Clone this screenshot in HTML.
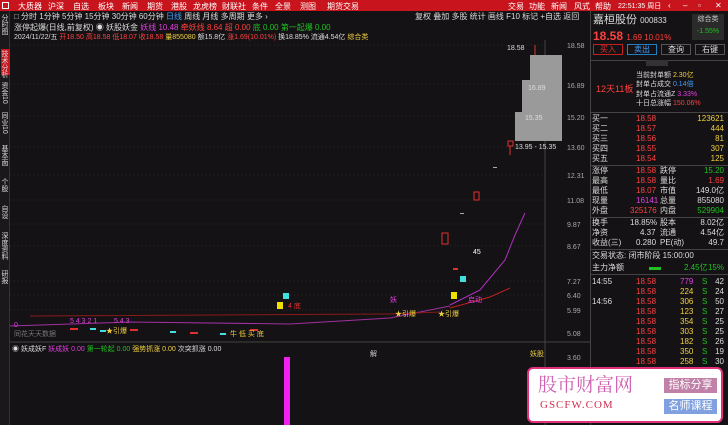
<!DOCTYPE html>
<html><head><meta charset="utf-8"><style>
*{margin:0;padding:0;box-sizing:border-box}
body{width:728px;height:425px;overflow:hidden;background:#141214;font-family:"Liberation Sans","Noto Sans CJK SC",sans-serif;font-size:8px;color:#ccc;position:relative}
.a{position:absolute;white-space:nowrap;line-height:1}
.top{position:absolute;left:0;top:0;width:728px;height:11px;background:#c8141c}
.top span{position:absolute;top:1px;color:#fff;font-size:8px}
.r{color:#ff4040}.g{color:#20c020}.y{color:#f0d040}.m{color:#e040e0}.w{color:#ddd}
.row{position:absolute;left:592px;width:132px;height:10px;font-size:8px;line-height:10px}
.row span{position:absolute}
</style></head><body>
<div class="top">
<div class="a" style="left:2px;top:2px;width:7px;height:7px;border:1px solid #fff"></div>
<span style="left:18px">大质器</span><span style="left:48px">沪深</span><span style="left:73px">自选</span><span style="left:98px">板块</span><span style="left:122px">新闻</span><span style="left:147px">期货</span><span style="left:171px">港股</span><span style="left:193px">龙虎榜</span><span style="left:222px">财联社</span><span style="left:252px">条件</span><span style="left:275px">全景</span><span style="left:300px">测图</span><span style="left:327px">期货交易</span>
<span style="left:508px">交易</span><span style="left:529px">功能</span><span style="left:551px">新闻</span><span style="left:574px">风式</span><span style="left:595px">帮助</span><span style="left:618px;font-size:7px">22:51:35 周日</span><span style="left:668px">‹</span><span style="left:683px">–</span><span style="left:698px">▫</span><span style="left:715px">✕</span>
</div>
<div class="a" style="left:0;top:11px;width:10px;height:414px;background:#1a181a;border-right:1px solid #333"></div>
<div class="a" style="left:1px;top:49px;width:9px;height:26px;background:#c8141c"></div>
<div class="a w" style="left:1px;top:14px;font-size:7px;writing-mode:vertical-rl">分时图</div>
<div class="a w" style="left:1px;top:50px;font-size:7px;writing-mode:vertical-rl">技术分析</div>
<div class="a w" style="left:1px;top:82px;font-size:7px;writing-mode:vertical-rl">资金10</div>
<div class="a w" style="left:1px;top:112px;font-size:7px;writing-mode:vertical-rl">同业10</div>
<div class="a w" style="left:1px;top:145px;font-size:7px;writing-mode:vertical-rl">基本面</div>
<div class="a w" style="left:1px;top:178px;font-size:7px;writing-mode:vertical-rl">个股</div>
<div class="a w" style="left:1px;top:205px;font-size:7px;writing-mode:vertical-rl">自设</div>
<div class="a w" style="left:1px;top:232px;font-size:7px;writing-mode:vertical-rl">深度资料</div>
<div class="a w" style="left:1px;top:270px;font-size:7px;writing-mode:vertical-rl">研报</div>
<div class="a w" style="left:14px;top:13px">□ 分时 1分钟 5分钟 15分钟 30分钟 60分钟 <span style="color:#40a0ff">日线</span> 周线 月线 多周期 更多 ›</div>
<div class="a w" style="left:415px;top:13px">复权 叠加 多股 统计 画线 F10 标记 +自选 返回</div>
<div class="a w" style="left:14px;top:24px">涨停起爆(日线,前复权) ◉ <span class="w">妖股妖金</span> <span class="m">妖线 10.48</span> <span class="r">牵妖线 8.64 超 0.00</span> <span class="g">底 0.00 第一起爆 0.00</span></div>
<div class="a w" style="left:14px;top:34px;font-size:7px">2024/11/22/五 <span class="r">开18.50 高18.58 低18.07 收18.58</span> <span class="y">量855080</span> 额15.8亿 <span class="r">涨1.69(10.01%)</span> 换18.85% 流通4.54亿 <span class="y">综合类</span></div>
<svg class="a" style="left:10px;top:40px" width="580" height="385">
<g stroke="#2a2a2a" stroke-dasharray="1 3">
<line x1="0" y1="5" x2="535" y2="5"/><line x1="0" y1="44" x2="535" y2="44"/><line x1="0" y1="76" x2="535" y2="76"/><line x1="0" y1="107" x2="535" y2="107"/><line x1="0" y1="135" x2="535" y2="135"/><line x1="0" y1="160" x2="535" y2="160"/><line x1="0" y1="184" x2="535" y2="184"/><line x1="0" y1="206" x2="535" y2="206"/><line x1="0" y1="241" x2="535" y2="241"/><line x1="0" y1="255" x2="535" y2="255"/><line x1="0" y1="270" x2="535" y2="270"/>
</g>
<line x1="535" y1="0" x2="535" y2="385" stroke="#444"/>
<line x1="0" y1="302" x2="580" y2="302" stroke="#444"/>
<rect x="520" y="15" width="32" height="26" fill="#9a9a9a"/>
<rect x="512" y="40" width="40" height="32" fill="#9a9a9a"/>
<rect x="505" y="72" width="47" height="29" fill="#9a9a9a"/>
<text x="518" y="50" fill="#ddd" font-size="7">16.89</text>
<text x="515" y="80" fill="#ddd" font-size="7">15.35</text>
<text x="505" y="109" fill="#ddd" font-size="7">13.95 - 15.35</text>
<text x="497" y="10" fill="#ddd" font-size="7">18.58</text>
<line x1="525" y1="5" x2="525" y2="15" stroke="#e03030"/>
<rect x="498" y="101" width="5" height="5" fill="none" stroke="#e03030"/>
<line x1="500" y1="106" x2="500" y2="115" stroke="#e03030"/>
<rect x="483" y="127" width="4" height="1" fill="#aaa"/>
<rect x="464" y="152" width="5" height="8" fill="none" stroke="#e03030"/>
<rect x="450" y="173" width="4" height="1" fill="#aaa"/>
<rect x="432" y="193" width="6" height="11" fill="none" stroke="#e03030"/>
<text x="463" y="214" fill="#fff" font-size="7">45</text>
<rect x="443" y="228" width="5" height="2" fill="#e03030"/>
<rect x="450" y="236" width="6" height="6" fill="#40e0e0"/>
<rect x="441" y="252" width="6" height="7" fill="#f0e000"/>
<rect x="273" y="253" width="6" height="6" fill="#40e0e0"/>
<rect x="267" y="262" width="6" height="7" fill="#f0e000"/>
<polyline points="440,265 470,250 495,220 505,195 515,173" fill="none" stroke="#b030c0"/>
<polyline points="0,286 120,282 280,284 380,278 440,266" fill="none" stroke="#a030a0"/>
<polyline points="440,268 480,257 500,248" fill="none" stroke="#c02020"/>
<polyline points="20,276 380,274 430,272" fill="none" stroke="#8a1a1a"/>
<g fill="#e03030"><rect x="60" y="288" width="8" height="2"/><rect x="120" y="289" width="8" height="2"/><rect x="180" y="292" width="8" height="2"/><rect x="240" y="289" width="8" height="2"/></g>
<g fill="#40e0e0"><rect x="80" y="288" width="6" height="2"/><rect x="90" y="290" width="6" height="2"/><rect x="160" y="291" width="6" height="2"/><rect x="210" y="293" width="6" height="2"/></g>
<text x="4" y="287" fill="#e040e0" font-size="7">0</text>
<text x="60" y="283" fill="#e040e0" font-size="7">5 4 3 2 1</text>
<text x="104" y="283" fill="#e040e0" font-size="7">5 4 3</text>
<text x="96" y="293" fill="#f0d040" font-size="7">★引爆</text>
<text x="220" y="296" fill="#f0d040" font-size="7">牛 低 买 底</text>
<text x="278" y="268" fill="#e03030" font-size="7">4 底</text>
<text x="380" y="262" fill="#e040e0" font-size="7">妖</text>
<text x="385" y="276" fill="#f0d040" font-size="7">★引爆</text>
<text x="428" y="276" fill="#f0d040" font-size="7">★引爆</text>
<text x="458" y="262" fill="#e040e0" font-size="7">启动</text>
<text x="4" y="296" fill="#777" font-size="7">同花天天数据</text>
<text x="360" y="316" fill="#ccc" font-size="7">解</text>
<text x="520" y="316" fill="#f0d040" font-size="7">妖股</text>
<rect x="274" y="317" width="6" height="68" fill="#f020f0"/>
<g fill="#aaa" font-size="7"><text x="557" y="8">18.58</text><text x="557" y="48">16.89</text><text x="557" y="80">15.20</text><text x="557" y="110">13.60</text><text x="557" y="138">12.31</text><text x="557" y="163">11.08</text><text x="557" y="187">9.87</text><text x="557" y="209">8.67</text><text x="557" y="244">7.27</text><text x="557" y="258">6.40</text><text x="557" y="273">5.99</text><text x="557" y="296">5.08</text><text x="557" y="320">3.60</text></g>
</svg>
<div class="a w" style="left:12px;top:346px;font-size:7px">◉ 妖成妖F <span class="m">妖成妖 0.00</span> <span class="g">第一轮起 0.00</span> <span class="y">强势抓涨 0.00</span> <span class="w">次突抓涨 0.00</span></div>
<div class="a" style="left:590px;top:11px;width:1px;height:414px;background:#444"></div>
<div class="a w" style="left:593px;top:15px;font-size:11px">嘉桓股份 <span style="font-size:8px">000833</span></div>
<div class="a" style="left:692px;top:14px;width:32px;height:26px;background:#2a2a2a;font-size:7px;color:#ccc;text-align:center;line-height:12px">综合类<br><span class="g">-1.55%</span></div>
<div class="a r" style="left:593px;top:30px;font-size:12px;font-weight:bold">18.58 <span style="font-size:8px;font-weight:normal">1.69 10.01%</span></div>
<div class="a" style="left:593px;top:44px;width:30px;height:11px;border:1px solid #c02020;color:#e03030;text-align:center;line-height:9px">买入</div>
<div class="a" style="left:627px;top:44px;width:30px;height:11px;border:1px solid #2080c0;color:#40a0ff;text-align:center;line-height:9px">卖出</div>
<div class="a w" style="left:661px;top:44px;width:30px;height:11px;border:1px solid #555;text-align:center;line-height:9px">查询</div>
<div class="a w" style="left:695px;top:44px;width:30px;height:11px;border:1px solid #555;text-align:center;line-height:9px">右键</div>
<div class="a" style="left:591px;top:60px;width:137px;height:53px;border-top:1px solid #444;border-bottom:1px solid #444"></div>
<div class="a" style="left:646px;top:60px;width:22px;height:6px;background:#333"></div>
<div class="a r" style="left:596px;top:85px;font-size:9px">12天11板</div>
<div class="a w" style="left:636px;top:71px;font-size:7px;line-height:9.3px">当前封单额 <span class="y">2.30亿</span><br>封单占成交 <span style="color:#40a0ff">0.14倍</span><br>封单占流通Z <span class="m">3.33%</span><br>十日总涨幅 <span class="r">150.06%</span></div>
<div class="row" style="top:114px"><span class="w">买一</span><span class="r" style="left:44px">18.58</span><span class="y" style="right:0">123621</span></div>
<div class="row" style="top:124px"><span class="w">买二</span><span class="r" style="left:44px">18.57</span><span class="y" style="right:0">444</span></div>
<div class="row" style="top:134px"><span class="w">买三</span><span class="r" style="left:44px">18.56</span><span class="y" style="right:0">81</span></div>
<div class="row" style="top:144px"><span class="w">买四</span><span class="r" style="left:44px">18.55</span><span class="y" style="right:0">307</span></div>
<div class="row" style="top:154px"><span class="w">买五</span><span class="r" style="left:44px">18.54</span><span class="y" style="right:0">125</span></div>
<div class="a" style="left:591px;top:165px;width:137px;height:1px;background:#444"></div>
<div class="row" style="top:166px"><span class="w">涨停</span><span class="r" style="left:44px">18.58</span><span class="w" style="left:68px">跌停</span><span class="g" style="right:0">15.20</span></div>
<div class="row" style="top:176px"><span class="w">最高</span><span class="r" style="left:44px">18.58</span><span class="w" style="left:68px">量比</span><span class="r" style="right:0">1.69</span></div>
<div class="row" style="top:186px"><span class="w">最低</span><span class="r" style="left:44px">18.07</span><span class="w" style="left:68px">市值</span><span class="w" style="right:0">149.0亿</span></div>
<div class="row" style="top:196px"><span class="w">现量</span><span class="m" style="left:44px">16141</span><span class="w" style="left:68px">总量</span><span class="w" style="right:0">855080</span></div>
<div class="row" style="top:206px"><span class="w">外盘</span><span class="r" style="left:38px">325176</span><span class="w" style="left:68px">内盘</span><span class="g" style="right:0">529904</span></div>
<div class="a" style="left:591px;top:217px;width:137px;height:1px;background:#444"></div>
<div class="row" style="top:218px"><span class="w">换手</span><span class="w" style="left:38px">18.85%</span><span class="w" style="left:68px">股本</span><span class="w" style="right:0">8.02亿</span></div>
<div class="row" style="top:228px"><span class="w">净资</span><span class="w" style="left:48px">4.37</span><span class="w" style="left:68px">流通</span><span class="w" style="right:0">4.54亿</span></div>
<div class="row" style="top:238px"><span class="w">收益(三)</span><span class="w" style="left:44px">0.280</span><span class="w" style="left:68px">PE(动)</span><span class="w" style="right:0">49.7</span></div>
<div class="a" style="left:591px;top:249px;width:137px;height:1px;background:#444"></div>
<div class="row" style="top:251px"><span class="w">交易状态: 闭市阶段 15:00:00</span></div>
<div class="row" style="top:263px"><span class="w">主力净额</span><span style="left:57px;top:4px;width:12px;height:3px;background:#20c020"></span><span class="g" style="left:92px">2.45亿</span><span class="g" style="right:0">15%</span></div>
<div class="a" style="left:591px;top:274px;width:137px;height:1px;background:#444"></div>
<div class="row" style="top:277px"><span class="w">14:55</span><span class="r" style="left:44px">18.58</span><span class="m" style="left:88px">779</span><span class="g" style="left:110px">S</span><span class="w" style="right:0">42</span></div>
<div class="row" style="top:287px"><span class="r" style="left:44px">18.58</span><span class="y" style="left:88px">224</span><span class="g" style="left:110px">S</span><span class="w" style="right:0">24</span></div>
<div class="row" style="top:297px"><span class="w">14:56</span><span class="r" style="left:44px">18.58</span><span class="y" style="left:88px">306</span><span class="g" style="left:110px">S</span><span class="w" style="right:0">50</span></div>
<div class="row" style="top:307px"><span class="r" style="left:44px">18.58</span><span class="y" style="left:88px">123</span><span class="g" style="left:110px">S</span><span class="w" style="right:0">27</span></div>
<div class="row" style="top:317px"><span class="r" style="left:44px">18.58</span><span class="y" style="left:88px">354</span><span class="g" style="left:110px">S</span><span class="w" style="right:0">25</span></div>
<div class="row" style="top:327px"><span class="r" style="left:44px">18.58</span><span class="y" style="left:88px">303</span><span class="g" style="left:110px">S</span><span class="w" style="right:0">25</span></div>
<div class="row" style="top:337px"><span class="r" style="left:44px">18.58</span><span class="y" style="left:88px">182</span><span class="g" style="left:110px">S</span><span class="w" style="right:0">26</span></div>
<div class="row" style="top:347px"><span class="r" style="left:44px">18.58</span><span class="y" style="left:88px">350</span><span class="g" style="left:110px">S</span><span class="w" style="right:0">19</span></div>
<div class="row" style="top:357px"><span class="r" style="left:44px">18.58</span><span class="y" style="left:88px">258</span><span class="g" style="left:110px">S</span><span class="w" style="right:0">30</span></div>
<div class="a" style="left:527px;top:367px;width:196px;height:56px;background:#fff;border:2px solid #e0307a;border-radius:6px"></div>
<div class="a" style="left:538px;top:374px;font-size:19px;color:#d060b0;font-family:'Noto Serif CJK SC',serif">股市财富网</div>
<div class="a" style="left:540px;top:400px;font-size:11px;color:#d03050;font-family:'Liberation Serif',serif;letter-spacing:1px">GSCFW.COM</div>
<div class="a" style="left:664px;top:378px;width:53px;height:15px;background:#c080a8;color:#fff;font-size:11px;text-align:center;line-height:15px">指标分享</div>
<div class="a" style="left:664px;top:399px;width:53px;height:15px;background:#80a0e0;color:#fff;font-size:11px;text-align:center;line-height:15px">名师课程</div>
</body></html>
